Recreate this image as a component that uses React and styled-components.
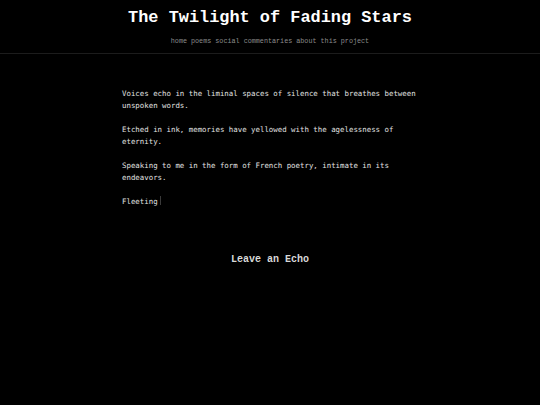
import React from 'react';
import styled, { createGlobalStyle, keyframes } from 'styled-components';

const Global = createGlobalStyle`
  html, body {
    margin: 0;
    padding: 0;
    background: #000;
  }
`;

const Page = styled.div`
  min-height: 405px;
  background: #000;
  color: #ddd;
`;

const Header = styled.header`
  padding: 10px 0 8px;
  border-bottom: 1px solid #1c1c1c;
  text-align: center;
`;

const Title = styled.h1`
  margin: 0;
  font-family: "Liberation Mono", "Courier New", monospace;
  font-size: 16.9px;
  line-height: 16px;
  font-weight: bold;
  color: #fff;
`;

const Nav = styled.nav`
  margin-top: 11px;
  display: flex;
  justify-content: center;
  gap: 4px;
  font-family: "Liberation Mono", "Courier New", monospace;
  font-size: 6.75px;
  line-height: 8px;
`;

const NavLink = styled.a`
  color: #8c8c8c;
  text-decoration: none;
`;

const Main = styled.main`
  width: 296px;
  margin: 0 auto;
  padding-top: 34px;
`;

const Verse = styled.p`
  margin: 0 0 12px;
  font-family: "DejaVu Sans Mono", monospace;
  font-size: 7.4px;
  line-height: 12px;
  color: #e0e0e0;
`;

const blink = keyframes`
  50% { opacity: 0; }
`;

const Cursor = styled.span`
  display: inline-block;
  width: 1px;
  height: 9px;
  margin-left: 2px;
  vertical-align: -1px;
  background: #3a3a3a;
  animation: ${blink} 1s step-end infinite;
`;

const EchoHeading = styled.h2`
  margin: 46px 0 0;
  text-align: center;
  font-family: "Liberation Mono", "Courier New", monospace;
  font-size: 10px;
  line-height: 12px;
  font-weight: bold;
  color: #d8d8d8;
`;

const links = ['home', 'poems', 'social commentaries', 'about this project'];

const verses = [
  'Voices echo in the liminal spaces of silence that breathes between unspoken words.',
  'Etched in ink, memories have yellowed with the agelessness of eternity.',
  'Speaking to me in the form of French poetry, intimate in its endeavors.',
];

export default function App() {
  return (
    <Page>
      <Global />
      <Header>
        <Title>The Twilight of Fading Stars</Title>
        <Nav>
          {links.map((l) => (
            <NavLink key={l} href="#">{l}</NavLink>
          ))}
        </Nav>
      </Header>
      <Main>
        {verses.map((v) => (
          <Verse key={v}>{v}</Verse>
        ))}
        <Verse>
          Fleeting<Cursor />
        </Verse>
        <EchoHeading>Leave an Echo</EchoHeading>
      </Main>
    </Page>
  );
}
